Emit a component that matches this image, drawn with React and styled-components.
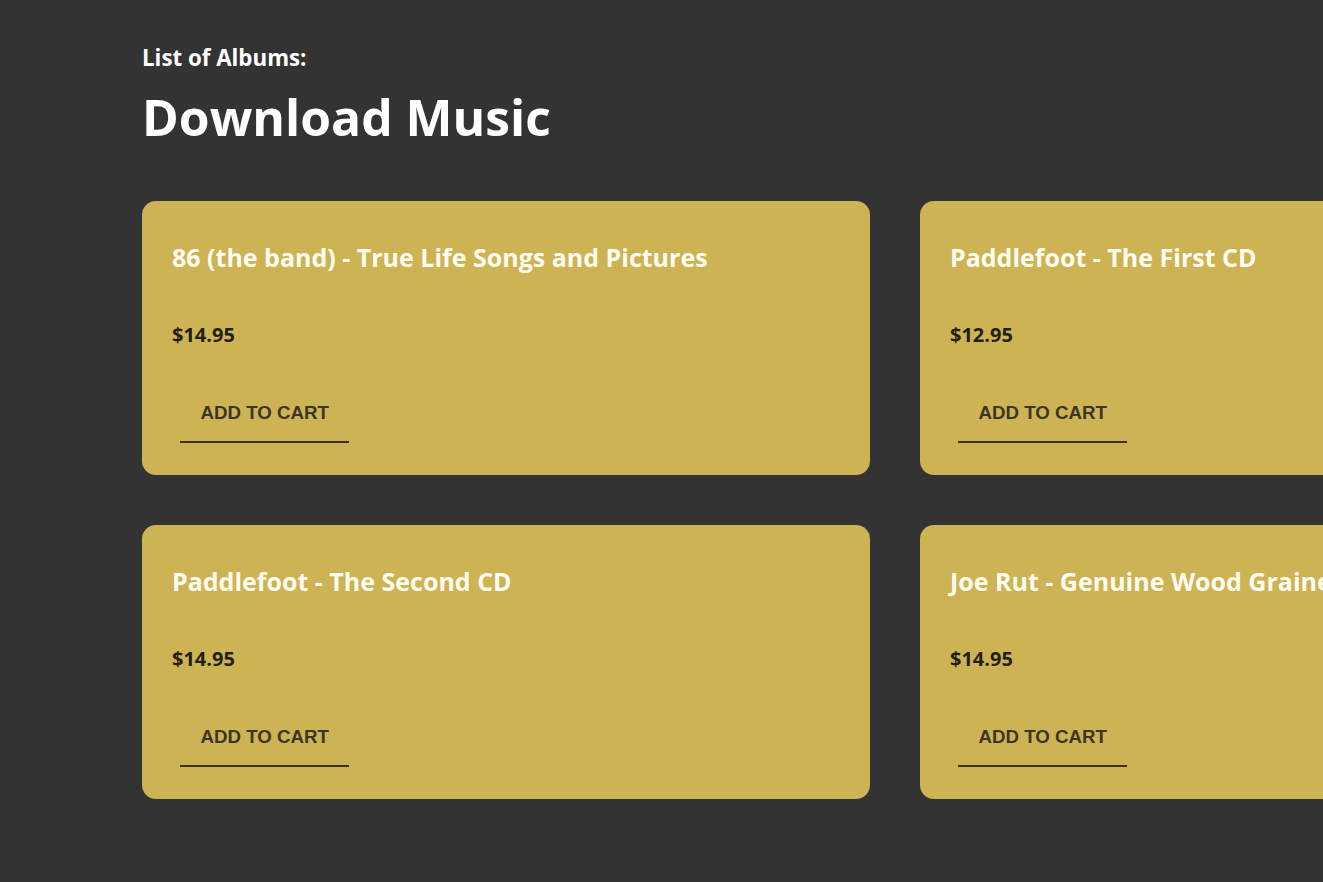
import React from "react";
import styled, { createGlobalStyle } from "styled-components";

const Global = createGlobalStyle`
  html, body { margin: 0; padding: 0; background: #333333; overflow: hidden; }
  body { font-family: "Open Sans", "Liberation Sans", sans-serif; }
`;

const Page = styled.main`
  padding: 42px 0 40px 142px;
  min-height: 882px;
  box-sizing: border-box;
`;

const Kicker = styled.h3`
  margin: 0;
  font-size: 22.3px;
  line-height: 32px;
  font-weight: 700;
  color: #ffffff;
`;

const Title = styled.h1`
  margin: 11px 0 0;
  font-size: 49.8px;
  line-height: 64px;
  font-weight: 700;
  color: #ffffff;
`;

const Grid = styled.div`
  display: grid;
  grid-template-columns: 728px 728px;
  gap: 50px;
  margin-top: 52px;
`;

const Card = styled.article`
  background: #cdb353;
  border-radius: 14px;
  height: 274px;
  box-sizing: border-box;
  padding: 38px 30px 30px;
  display: flex;
  flex-direction: column;
  align-items: flex-start;
`;

const AlbumName = styled.h2`
  margin: 0;
  font-size: 25px;
  line-height: 36px;
  font-weight: 700;
  color: #fffdf2;
  white-space: nowrap;
`;

const Price = styled.p`
  margin: 46px 0 0;
  font-size: 20px;
  line-height: 28px;
  font-weight: 700;
  color: #231f14;
`;

const CartButton = styled.button`
  margin: 35px 0 0 8px;
  padding: 18px 20.5px 18px;
  background: transparent;
  border: none;
  border-bottom: 2px solid #3a3420;
  font-family: "Liberation Sans", Arial, sans-serif;
  font-size: 18.7px;
  line-height: 21px;
  font-weight: 700;
  color: #3b3624;
  cursor: pointer;
`;

const albums = [
  { name: "86 (the band) - True Life Songs and Pictures", price: "$14.95" },
  { name: "Paddlefoot - The First CD", price: "$12.95" },
  { name: "Paddlefoot - The Second CD", price: "$14.95" },
  { name: "Joe Rut - Genuine Wood Grained Finish", price: "$14.95" },
];

export default function App() {
  return (
    <>
      <Global />
      <Page>
        <Kicker>List of Albums:</Kicker>
        <Title>Download Music</Title>
        <Grid>
          {albums.map((a) => (
            <Card key={a.name}>
              <AlbumName>{a.name}</AlbumName>
              <Price>{a.price}</Price>
              <CartButton>ADD TO CART</CartButton>
            </Card>
          ))}
        </Grid>
      </Page>
    </>
  );
}
